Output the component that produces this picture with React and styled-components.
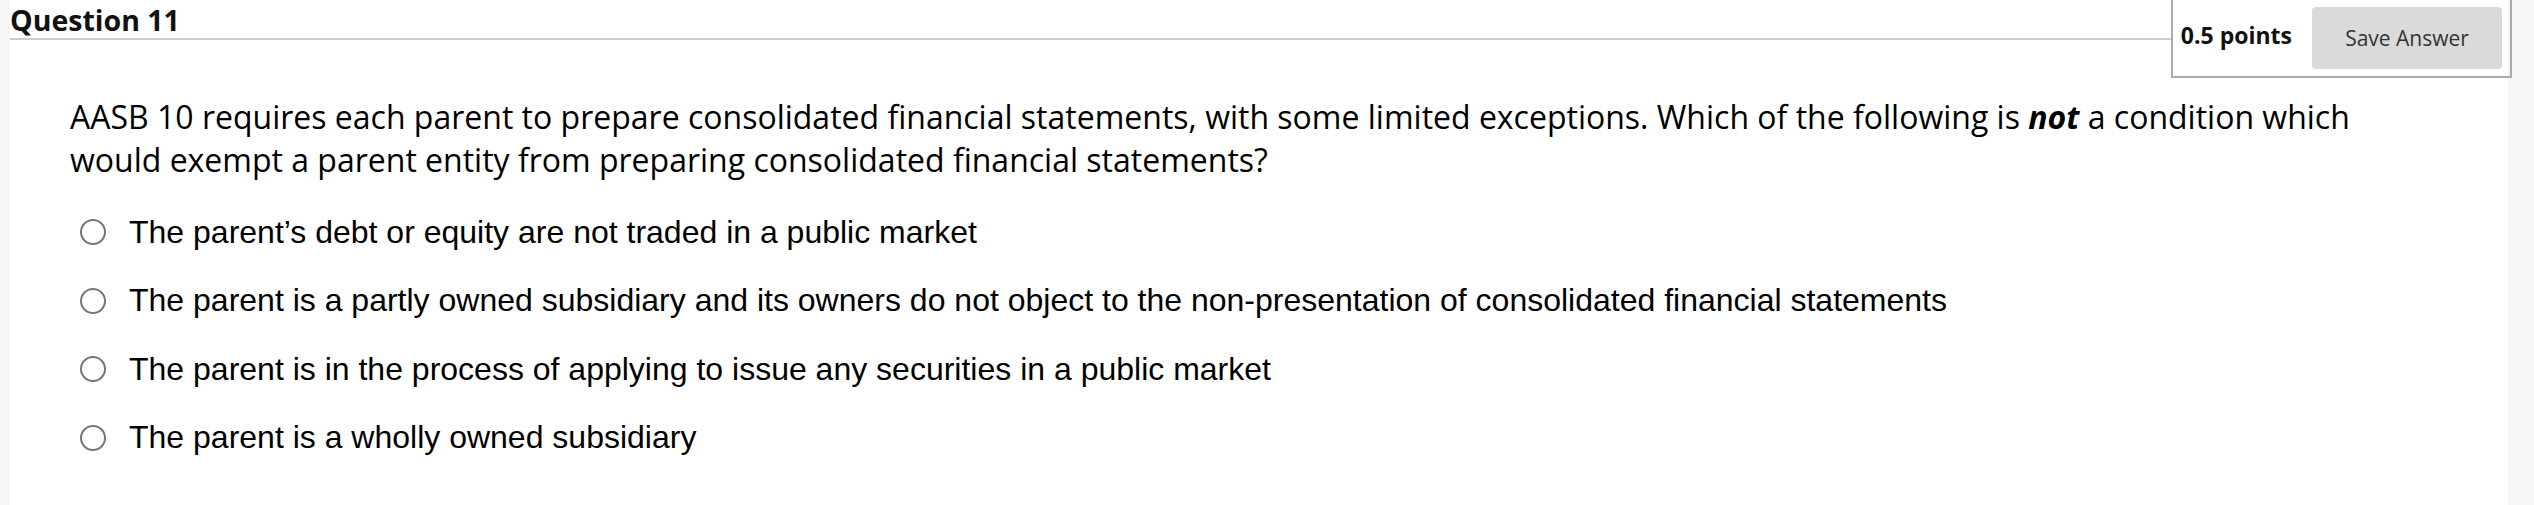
import React from 'react';
import styled, { createGlobalStyle } from 'styled-components';

const GlobalStyle = createGlobalStyle`
  html, body {
    margin: 0;
    padding: 0;
    background: #f6f6f6;
  }
`;

const Page = styled.div`
  height: 505px;
  padding: 0 26px 0 10px;
  overflow: hidden;
`;

const Panel = styled.div`
  background: #fff;
  height: 100%;
  font-family: "Open Sans", "Liberation Sans", sans-serif;
  color: #000;
`;

const Header = styled.div`
  display: flex;
  align-items: flex-start;
`;

const TitleBar = styled.div`
  flex: 1;
  height: 38px;
  border-bottom: 2px solid #cccccc;
`;

const Title = styled.h2`
  margin: 0;
  font-size: 28.5px;
  font-weight: 700;
  line-height: 40px;
  color: #111;
`;

const PointsBox = styled.div`
  display: flex;
  align-items: center;
  gap: 20px;
  height: 76px;
  padding: 0 8px;
  margin-right: -4px;
  border: 2px solid #aaaaaa;
  border-top: none;
`;

const Points = styled.span`
  font-size: 23px;
  font-weight: 700;
  color: #111;
  margin-top: -6px;
`;

const SaveButton = styled.button`
  width: 190px;
  height: 62px;
  border: none;
  border-radius: 4px;
  background: #dadada;
  color: #333;
  font-family: "Open Sans", "Liberation Sans", sans-serif;
  font-size: 21px;
  cursor: pointer;
`;

const Body = styled.div`
  padding: 17px 60px 0;
`;

const Stem = styled.p`
  margin: 0 0 17px;
  font-size: 32px;
  line-height: 43px;
`;

const Options = styled.div`
  display: flex;
  flex-direction: column;
`;

const Option = styled.label`
  display: flex;
  align-items: center;
  gap: 23px;
  height: 68.5px;
  padding-left: 10px;
  font-family: "Liberation Sans", Arial, sans-serif;
  font-size: 32px;
  cursor: pointer;
`;

const Radio = styled.span`
  width: 26px;
  height: 26px;
  box-sizing: border-box;
  border: 2px solid #767676;
  border-radius: 50%;
  flex-shrink: 0;
`;

const options = [
  'The parent’s debt or equity are not traded in a public market',
  'The parent is a partly owned subsidiary and its owners do not object to the non-presentation of consolidated financial statements',
  'The parent is in the process of applying to issue any securities in a public market',
  'The parent is a wholly owned subsidiary',
];

const App = () => (
  <Page>
    <GlobalStyle />
    <Panel>
      <Header>
        <TitleBar>
          <Title>Question 11</Title>
        </TitleBar>
        <PointsBox>
          <Points>0.5 points</Points>
          <SaveButton>Save Answer</SaveButton>
        </PointsBox>
      </Header>
      <Body>
        <Stem>
          AASB 10 requires each parent to prepare consolidated financial statements, with some limited exceptions. Which of the following is <b><i>not</i></b> a condition which would exempt a parent entity from preparing consolidated financial statements?
        </Stem>
        <Options>
          {options.map((text) => (
            <Option key={text}>
              <Radio />
              <span>{text}</span>
            </Option>
          ))}
        </Options>
      </Body>
    </Panel>
  </Page>
);

export default App;
